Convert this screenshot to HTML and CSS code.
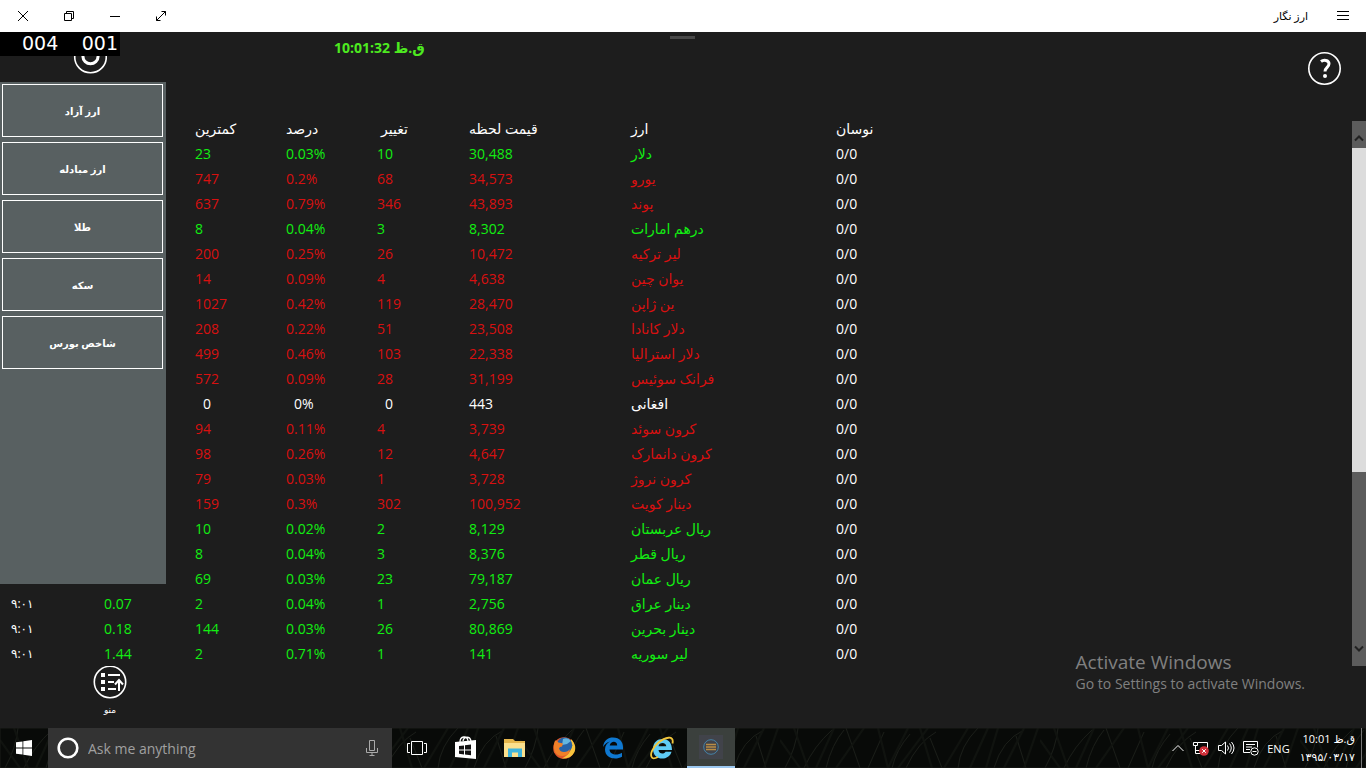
FILE: index.html
```html
<!DOCTYPE html>
<html lang="fa" dir="ltr">
<head>
    <meta charset="UTF-8">
    <meta name="viewport" content="width=device-width, initial-scale=1.0">
    <title>ارز نگار</title>
    <link rel="stylesheet" href="styles.css">
</head>
<body>
    <!-- Title bar -->
    <header class="titlebar">
        <button class="win-btn" aria-label="Close"><svg width="12" height="12" viewBox="0 0 12 12"><path d="M1 1l10 10M11 1L1 11"/></svg></button>
        <button class="win-btn" aria-label="Restore"><svg width="12" height="12" viewBox="0 0 12 12"><path d="M1.500 3.500h7v7h-7zM3.500 3.500v-2h7v7h-2"/></svg></button>
        <button class="win-btn" aria-label="Minimize"><svg width="12" height="12" viewBox="0 0 12 12"><path d="M1 6.500h10"/></svg></button>
        <button class="win-btn" aria-label="Full screen"><svg width="12" height="12" viewBox="0 0 12 12"><path d="M1.500 10.500l9-9M6.500 1.500h4v4M1.500 6.500v4h4"/></svg></button>
        <span class="title">ارز نگار</span>
        <button class="win-btn" aria-label="Menu"><svg width="12" height="12" viewBox="0 0 12 12"><path d="M0 1.500h12M0 5.500h12M0 9.500h12"/></svg></button>
    </header>

    <main class="app">
        <div class="topbar">
            <button class="round power" aria-label="Refresh"><svg width="34" height="34" viewBox="0 0 34 34"><circle cx="17.500" cy="17" r="15.800"/><path class="thick" d="M12 11a7.600 7.600 0 1 0 11 0M17.500 7v8"/></svg></button>
            <span class="clock">10:01:32 ق.ظ</span>
            <button class="round help" aria-label="Help"><svg width="34" height="34" viewBox="0 0 34 34"><circle cx="16.500" cy="16.500" r="15.700"/><path class="thick" d="M13 9.500c2.500-2 8-1.600 8 2.300 0 3.600-4 3.500-4 7.700"/><circle class="dot" cx="17" cy="24" r="2"/></svg></button>
        </div>
        <div class="handle"></div>
        <div class="counter"><span>004</span><span>001</span></div>

        <div class="board">
            <table class="rates">
                <colgroup><col class="c-time"><col class="c-num"><col class="c-num"><col class="c-num"><col class="c-change"><col class="c-price"><col class="c-name"><col></colgroup>
                <thead>
                    <tr><th></th><th></th><th>کمترین</th><th>درصد</th><th class="change">تغییر</th><th>قیمت لحظه</th><th>ارز</th><th>نوسان</th></tr>
                </thead>
                <tbody>
                    <tr class="up"><td></td><td></td><td>23</td><td>0.03%</td><td>10</td><td>30,488</td><td>دلار</td><td>0/0</td></tr>
                    <tr class="down"><td></td><td></td><td>747</td><td>0.2%</td><td>68</td><td>34,573</td><td>یورو</td><td>0/0</td></tr>
                    <tr class="down"><td></td><td></td><td>637</td><td>0.79%</td><td>346</td><td>43,893</td><td>پوند</td><td>0/0</td></tr>
                    <tr class="up"><td></td><td></td><td>8</td><td>0.04%</td><td>3</td><td>8,302</td><td>درهم امارات</td><td>0/0</td></tr>
                    <tr class="down"><td></td><td></td><td>200</td><td>0.25%</td><td>26</td><td>10,472</td><td>لیر ترکیه</td><td>0/0</td></tr>
                    <tr class="down"><td></td><td></td><td>14</td><td>0.09%</td><td>4</td><td>4,638</td><td>یوان چین</td><td>0/0</td></tr>
                    <tr class="down"><td></td><td></td><td>1027</td><td>0.42%</td><td>119</td><td>28,470</td><td>ین ژاپن</td><td>0/0</td></tr>
                    <tr class="down"><td></td><td></td><td>208</td><td>0.22%</td><td>51</td><td>23,508</td><td>دلار کانادا</td><td>0/0</td></tr>
                    <tr class="down"><td></td><td></td><td>499</td><td>0.46%</td><td>103</td><td>22,338</td><td>دلار استرالیا</td><td>0/0</td></tr>
                    <tr class="down"><td></td><td></td><td>572</td><td>0.09%</td><td>28</td><td>31,199</td><td>فرانک سوئیس</td><td>0/0</td></tr>
                    <tr><td></td><td></td><td class="zero">0</td><td class="zero">0%</td><td class="zero">0</td><td>443</td><td>افغانی</td><td>0/0</td></tr>
                    <tr class="down"><td></td><td></td><td>94</td><td>0.11%</td><td>4</td><td>3,739</td><td>کرون سوئد</td><td>0/0</td></tr>
                    <tr class="down"><td></td><td></td><td>98</td><td>0.26%</td><td>12</td><td>4,647</td><td>کرون دانمارک</td><td>0/0</td></tr>
                    <tr class="down"><td></td><td></td><td>79</td><td>0.03%</td><td>1</td><td>3,728</td><td>کرون نروژ</td><td>0/0</td></tr>
                    <tr class="down"><td></td><td></td><td>159</td><td>0.3%</td><td>302</td><td>100,952</td><td>دینار کویت</td><td>0/0</td></tr>
                    <tr class="up"><td></td><td></td><td>10</td><td>0.02%</td><td>2</td><td>8,129</td><td>ریال عربستان</td><td>0/0</td></tr>
                    <tr class="up"><td></td><td></td><td>8</td><td>0.04%</td><td>3</td><td>8,376</td><td>ریال قطر</td><td>0/0</td></tr>
                    <tr class="up"><td></td><td></td><td>69</td><td>0.03%</td><td>23</td><td>79,187</td><td>ریال عمان</td><td>0/0</td></tr>
                    <tr class="up"><td>۹:۰۱</td><td>0.07</td><td>2</td><td>0.04%</td><td>1</td><td>2,756</td><td>دینار عراق</td><td>0/0</td></tr>
                    <tr class="up"><td>۹:۰۱</td><td>0.18</td><td>144</td><td>0.03%</td><td>26</td><td>80,869</td><td>دینار بحرین</td><td>0/0</td></tr>
                    <tr class="up"><td>۹:۰۱</td><td>1.44</td><td>2</td><td>0.71%</td><td>1</td><td>141</td><td>لیر سوریه</td><td>0/0</td></tr>
                </tbody>
            </table>
            <div class="scrollbar">
                <button aria-label="Scroll up"><svg width="10" height="8" viewBox="0 0 10 8"><path d="M1 6.500l4-4 4 4"/></svg></button>
                <div class="track"><div class="thumb"></div></div>
                <button aria-label="Scroll down"><svg width="10" height="8" viewBox="0 0 10 8"><path d="M1 1.500l4 4 4-4"/></svg></button>
            </div>
        </div>

        <div class="bottombar">
            <button class="round menu-btn">
                <svg width="34" height="33" viewBox="0 0 34 33"><circle cx="17" cy="16" r="15.700"/><path class="fill" d="M8 7h4v4H8zM8 14h4v4H8zM8 21h4v4H8z"/><path class="line" d="M15 9h12M15 16h6M15 23h8M26 25V14M22 18.500l4-4.500 4 4.500"/></svg>
                <span>منو</span>
            </button>
        </div>

        <!-- Side menu, opens over the table -->
        <nav class="side">
            <button>ارز آزاد</button>
            <button>ارز مبادله</button>
            <button>طلا</button>
            <button>سکه</button>
            <button>شاخص بورس</button>
        </nav>

        <div class="watermark">
            <p class="wm-title">Activate Windows</p>
            <p class="wm-text">Go to Settings to activate Windows.</p>
        </div>
    </main>

    <!-- Taskbar -->
    <footer class="taskbar">
        <svg class="grass" width="100%" height="40" aria-hidden="true">
            <defs>
                <pattern id="grass" width="260" height="40" patternUnits="userSpaceOnUse">
                    <path d="M5 40Q16 20 18 0M24 40Q34 18 52 2M46 40q6-24 18-38M66 0l14 40M88 40l16-36M112 40q4-18 18-34M126 40Q138 14 156 4M150 10l12 30M178 40q2-22 20-40M214 40q8-28 30-38M236 8l10 32"/>
                    <path class="dim" d="M0 12l20 28M14 0l14 40M36 40L54 0M56 40L84 0M98 0l10 40M108 40l20-40M118 40l30-40M140 0l12 40M164 40l24-40M190 40l18-40M206 40l12-40M224 40l20-40M244 40l14-40"/>
                </pattern>
            </defs>
            <rect width="100%" height="40" fill="url(#grass)"/>
        </svg>
        <button class="start" aria-label="Start"><svg width="16" height="16" viewBox="0 0 16 16"><path fill="#fff" d="M0 2.300l6.500-.9v6.200H0zM7.300 1.300L16 0v7.600H7.300zM0 8.400h6.500v6.200L0 13.700zM7.300 8.400H16V16l-8.700-1.200z"/></svg></button>
        <div class="search">
            <svg width="22" height="22" viewBox="0 0 22 22"><circle cx="11" cy="11" r="9.300" fill="none" stroke="#fff" stroke-width="2.600"/></svg>
            <input type="text" placeholder="Ask me anything" aria-label="Ask me anything">
            <svg width="12" height="16" viewBox="0 0 12 16"><path fill="none" stroke="#aaa" d="M3.500.5h5v10h-5zM.5 8v4.500h11V8M6 12.500v3M3.500 15.500h5"/></svg>
        </div>
        <div class="apps">
            <button aria-label="Task view"><svg width="20" height="16" viewBox="0 0 20 16"><path fill="none" stroke="#fff" d="M4.500 1.500h11v13h-11zM3 3.500H.5v9H3M17 3.500h2.500v9H17"/></svg></button>
            <button aria-label="Store"><svg width="22" height="24" viewBox="0 0 22 24"><path fill="none" stroke="#fff" stroke-width="1.300" d="M5 6c0-6 7-7 8-1M8 5c1-5 7-5 8 0"/><path fill="#fff" d="M0 6l21-2v19L0 21z"/><path fill="#111" d="M4 10l5-.6v4H4zM10 9.300l6-.8v4.900h-6zM4 14.400h5v4l-5-.6zM10 14.400h6v4.900l-6-.8z"/></svg></button>
            <button aria-label="File Explorer"><svg width="22" height="20" viewBox="0 0 22 20"><path fill="#e5b64c" d="M0 1h9l2 2h10v7H0z"/><path fill="#fbe08d" d="M0 5h21v14H0z"/><path fill="#3fb4dc" d="M4 10.500h14V19h-4v-4.500H8V19H4z"/></svg></button>
            <button aria-label="Firefox"><svg width="24" height="24" viewBox="0 0 24 24"><circle cx="12" cy="12" r="10.800" fill="#e2572b"/><path fill="#f8c43c" d="M19 3q6 6 3.500 13Q19 23 10 22.500q8-4 9-10z"/><circle cx="12.500" cy="9.300" r="7.800" fill="#2763a8"/><path fill="#65b6df" d="M11 3q5-2 8 2l-4 3-5 1z"/><path fill="#f08029" d="M3 4.500q2 0 3.500 2l4.500 1-1 3q-2.500 0-3 2 1 3.500 5 3.500 4 0 6-3-1 7-7.500 7-6 0-8-5Q1 10 3 4.500z"/></svg></button>
            <button aria-label="Edge"><svg width="22" height="22" viewBox="0 0 22 22"><path fill="#0f78d0" d="M1 10C2 3 6 .5 11 .5c7 0 10 5 10 9.500v2.500H7.500c.3 6 8.500 6 12.500 3.200v4.100c-7 4-17 1.200-17-7.200 0-4 2.200-6.700 5-8Q3.500 5.700 1 10zm6.700-1.500h7.500c0-5-6.500-5-7.500 0z"/></svg></button>
            <button aria-label="Internet Explorer"><svg width="24" height="24" viewBox="0 0 24 24"><path fill="#5fcbf4" d="M3 13C3 6 7.500 3 12.500 3 19 3 22 7.500 22 14H8.500c.5 4.500 6 4.300 7 1.700h6C19.500 25 3 25.500 3 13zm5.500-2.700h7.800c-.5-4.200-7-4.300-7.800 0z"/><path fill="none" stroke="#f2c63b" stroke-width="1.800" d="M22.500 7.500c2-9-8-6-14-1S-1 19.500 2.500 22c1.400.8 3.500 0 5.500-1"/></svg></button>
            <button class="current" aria-label="ارز نگار"><svg width="24" height="24" viewBox="0 0 24 24"><path fill="#41434a" d="M0 0h24v24H0z"/><circle cx="12" cy="12" r="7.300" fill="none" stroke="#4682a6"/><path stroke="#b98d45" stroke-width="1.400" d="M7 9.500h10M7 12h10M7 14.500h10"/></svg></button>
        </div>
        <div class="tray">
            <svg width="14" height="8" viewBox="0 0 14 8"><path d="M1.500 7L7 1.500 12.500 7"/></svg>
            <svg width="18" height="16" viewBox="0 0 18 16"><path d="M1.500 2.500h4v3h-4zM3.500 5.500v8h5M5.500 2.500h10V8M3.500 10.500h4"/><circle cx="12" cy="11" r="4.800" fill="#d0303a" stroke="none"/><path d="M10.200 9.200l3.600 3.600M13.800 9.200l-3.600 3.600"/></svg>
            <svg width="18" height="14" viewBox="0 0 18 14"><path d="M1.500 4.500h3l4-3.500v12l-4-3.500h-3zM10.500 4.500q2 2.500 0 5M12.500 2.500q3.500 4.500 0 9M14.500 1q5 6 0 12"/></svg>
            <svg width="18" height="16" viewBox="0 0 18 16"><path d="M8 12.500H1.500v-11h14v6M4 4.500h9M4 7h6M4 9.500h4"/><circle cx="12.500" cy="11.500" r="3.700"/><path d="M10.500 11.500h4"/></svg>
            <span class="lang">ENG</span>
            <div class="datetime"><span>10:01 ق.ظ</span><span>۱۳۹۵/۰۳/۱۷</span></div>
        </div>
    </footer>
</body>
</html>
```
FILE: styles.css
```css
* { margin: 0; padding: 0; box-sizing: border-box; }
body { display: flex; flex-direction: column; min-height: 100vh; background: #1d1d1d; color: #fff; font-family: "Open Sans", "DejaVu Sans", sans-serif; font-size: 14px; }
button { border: none; background: none; color: inherit; font-family: inherit; cursor: pointer; }
svg { display: block; flex: none; }

/* Title bar */
.titlebar { display: flex; align-items: center; height: 32px; background: #fff; color: #000; }
.win-btn { display: flex; align-items: center; justify-content: center; width: 46px; height: 32px; }
.win-btn svg { fill: none; stroke: #000; }
.title { margin-left: auto; margin-right: 12px; font-size: 11px; line-height: 14px; }

/* App */
.app { position: relative; flex: 1; display: flex; flex-direction: column; }
.topbar { display: flex; align-items: flex-start; height: 84px; }
.round svg { fill: none; stroke: #fff; stroke-width: 1.6; }
.round .thick { stroke-width: 3; }
.round .dot, .round .fill { fill: #fff; stroke: none; }
.power { margin: 8px 0 0 73px; }
.clock { margin-left: 227px; margin-top: 6px; line-height: 20px; font-weight: bold; color: #4dea20; }
.help { margin: 20px 24px 0 auto; }
.handle { position: absolute; top: 4px; left: 50%; width: 25px; height: 3px; margin-left: -13px; background: #484848; }
.counter { position: absolute; top: 0; left: 0; display: flex; justify-content: space-between; width: 120px; height: 24px; padding: 0 2px 0 22px; background: #000; font: 19px/23px "DejaVu Sans", sans-serif; }

/* Rates table */
.board { display: flex; }
.rates { flex: 1; table-layout: fixed; border-collapse: collapse; margin-left: 11px; }
.rates th, .rates td { height: 25px; line-height: 24px; text-align: left; font-weight: normal; white-space: nowrap; }
.rates .change { padding-left: 4px; }
.c-time { width: 93px; }
.c-num { width: 91px; }
.c-change { width: 92px; }
.c-price { width: 162px; }
.c-name { width: 205px; }
.up { color: #12ee12; }
.down { color: #d81010; }
.rates td:first-child { font-size: 12px; color: #fff; }
.rates td:last-child { color: #fff; }
.rates .zero { padding-left: 8px; }

.scrollbar { display: flex; flex-direction: column; width: 14px; margin-top: 5px; background: #5c5c5c; }
.scrollbar button { display: flex; align-items: center; justify-content: center; height: 27px; padding-top: 6px; }
.scrollbar button:last-child { padding: 0 0 8px; }
.scrollbar svg { fill: none; stroke: #222; stroke-width: 2; }
.track { flex: 1; }
.thumb { height: 66%; background: #dcdcdc; }

.bottombar { flex: 1; min-height: 62px; padding-left: 93px; }
.menu-btn { display: flex; flex-direction: column; align-items: center; gap: 4px; }
.menu-btn span { font-size: 9px; line-height: 14px; }
.round .line { stroke-width: 2; }

/* Side menu */
.side { position: absolute; top: 50px; bottom: 144px; left: 0; display: flex; flex-direction: column; gap: 5px; width: 166px; padding: 2px 3px 0 2px; background: #586061; }
.side button { height: 53px; border: 1px solid #fff; font-size: 10px; font-weight: bold; }

.watermark { position: absolute; right: 61px; bottom: 34px; color: #808080; }
.wm-title { font-size: 19px; line-height: 24px; }
.wm-text { font-size: 14px; line-height: 20px; }

/* Taskbar */
.taskbar { position: relative; display: flex; height: 40px; background: #080a08; }
.taskbar > * { position: relative; }
.taskbar .grass { position: absolute; top: 0; left: 0; fill: none; stroke: #1a1d18; }
.grass .dim { stroke: #10130f; stroke-width: 2; }
.start { display: flex; align-items: center; justify-content: center; width: 48px; }
.search { display: flex; align-items: center; gap: 9px; width: 344px; padding: 0 14px 0 9px; background: #333; }
.search input { flex: 1; min-width: 0; border: none; outline: none; background: none; color: #fff; font: 14px "Open Sans", sans-serif; }
.search input::placeholder { color: #a0a0a0; opacity: 1; }
.apps { display: flex; gap: 1px; margin-left: 1px; }
.apps button { display: flex; align-items: center; justify-content: center; width: 48px; }
.apps .current { background: #3b403d; border-bottom: 2px solid #9cc8f0; }
.tray { display: flex; align-items: center; gap: 7px; margin-left: auto; margin-right: 4px; padding-right: 6px; border-right: 1px solid #777; }
.tray svg { fill: none; stroke: #fff; }
.lang { font-size: 11px; }
.datetime { display: flex; flex-direction: column; align-items: flex-end; margin-left: 3px; font-size: 11px; line-height: 18px; }
```
